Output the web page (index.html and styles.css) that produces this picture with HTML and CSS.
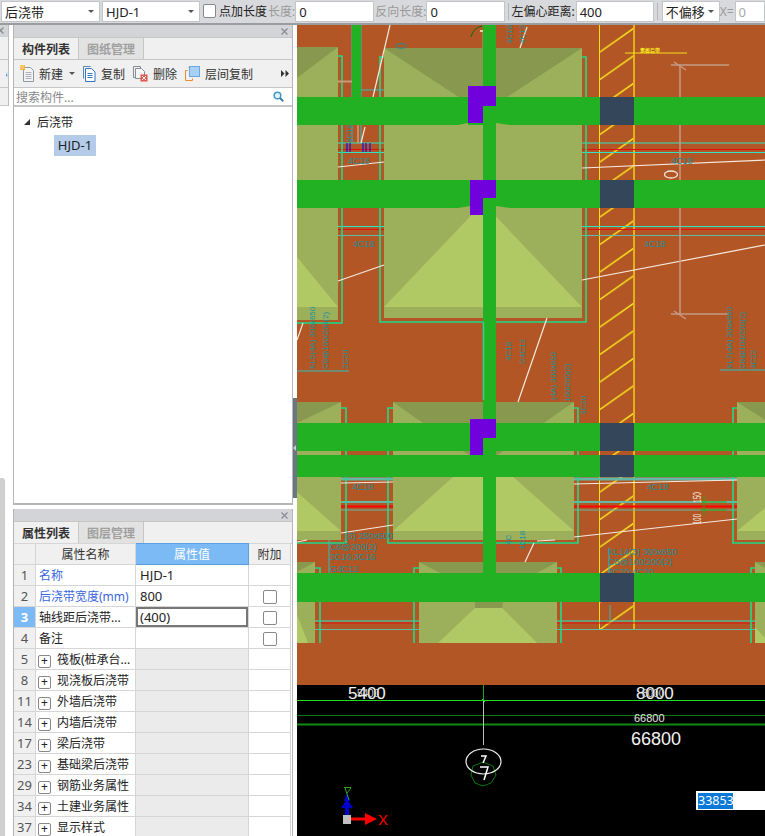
FILE: index.html
```html
<!DOCTYPE html>
<html lang="zh">
<head>
<meta charset="utf-8">
<title>后浇带</title>
<link rel="stylesheet" href="styles.css">
</head>
<body>
<div class="topbar">
  <div class="combo w99"><span>后浇带</span><i class="caret"></i></div>
  <div class="combo w98"><span>HJD-1</span><i class="caret"></i></div>
  <span class="check top-check"></span>
  <span class="lbl">点加长度</span>
  <span class="lbl dim">长度:</span>
  <div class="field w79">0</div>
  <span class="lbl dim">反向长度:</span>
  <div class="field w79">0</div>
  <i class="sep"></i>
  <span class="lbl sp">左偏心距离:</span>
  <div class="field w78">400</div>
  <i class="sep"></i>
  <div class="combo w58"><span>不偏移</span><i class="caret"></i></div>
  <span class="lbl dim nx">X=</span>
  <div class="field grow dimval">0</div>
</div>

<div class="main">
  <aside class="stub">
    <div class="stub-top">
      <div class="stub-title"><svg class="close stub-close" width="7" height="7" viewBox="0 0 7 7"><path d="M0.500 0.500L6.500 6.500M6.500 0.500L0.500 6.500" stroke="#8b8d92" stroke-width="1.300"/></svg></div>
      <div class="stub-row tall"></div>
      <div class="stub-row tools"><svg width="8" height="20" viewBox="0 0 8 20"><rect x="-4" y="0.5" width="11" height="19" rx="2" fill="#fff" stroke="#6fb0ee"/><rect x="-2" y="5" width="7" height="10" fill="#3f8fdc"/><rect x="-2" y="7" width="7" height="1" fill="#fff"/></svg></div>
      <div class="stub-row"></div>
    </div>
    <div class="stub-block"></div>
  </aside>

  <div class="side">
    <section class="panel top-panel">
      <div class="p-title"><svg class="close" width="7" height="7" viewBox="0 0 7 7"><path d="M0.500 0.500L6.500 6.500M6.500 0.500L0.500 6.500" stroke="#8b8d92" stroke-width="1.300"/></svg></div>
      <div class="tabs">
        <span class="tab on">构件列表</span><span class="tab">图纸管理</span>
      </div>
      <div class="tools">
        <svg class="ic ic-new" width="15" height="17" viewBox="0 0 15 17"><path d="M3.500 2.500h7l3 3v11h-10z" fill="#f4f4f4" stroke="#8d99a6"/><path d="M5.500 7.500h6M5.500 9.500h6M5.500 11.500h6M5.500 13.500h6" stroke="#a9b2bc"/><rect x="0" y="0" width="5" height="5" fill="#f5a020"/><path d="M1 0v5M3 0v5M0 1h5M0 3h5" stroke="#ffe2a0" stroke-width=".7"/></svg>
        <span class="t-new">新建</span><i class="caret small"></i>
        <svg class="ic ic-copy" width="13" height="16" viewBox="0 0 13 16"><path d="M.5.5h7M.5.500v12" stroke="#5d86b8" fill="none"/><path d="M2.500 2.500h6l3.500 3.500v9.500h-9.500z" fill="#fff" stroke="#2f78c6"/><path d="M4.500 7.500h5M4.500 9.500h5M4.500 11.500h5" stroke="#2f78c6"/></svg>
        <span class="t-copy">复制</span>
        <svg class="ic ic-del" width="15" height="16" viewBox="0 0 15 16"><path d="M.5.5h7v2M.500.500v11h2" stroke="#8a8f96" fill="none"/><path d="M2.500 2.500h6l3 3v7h-9z" fill="#f6f6f6" stroke="#8a8f96"/><rect x="7.500" y="8.500" width="7" height="7" fill="#e2574c"/><path d="M9 10l4 4M13 10l-4 4" stroke="#fff"/></svg>
        <span class="t-del">删除</span>
        <svg class="ic ic-layer" width="15" height="15" viewBox="0 0 15 15"><path d="M3.500 1.500v-.5M.500 14.500v-10h2M.500 14.500h7v-2" stroke="#ef8a2a" fill="none"/><rect x="4.500" y="0.500" width="10" height="10" fill="#a9d0f5" stroke="#6aa6e0"/></svg>
        <span class="t-layer">层间复制</span>
        <span class="more">
          <svg width="8" height="7" viewBox="0 0 8 7"><path d="M0 0l3.500 3.500L0 7zM4.500 0L8 3.500 4.500 7z" fill="#333"/></svg>
        </span>
      </div>
      <div class="search">
        <span class="ph">搜索构件...</span>
        <svg width="11" height="11" viewBox="0 0 11 11"><circle cx="4.500" cy="4.500" r="3.300" fill="#e3f1fb" stroke="#3f9ac9" stroke-width="1.500"/><path d="M7 7l3.200 3.200" stroke="#3f7fa8" stroke-width="2"/></svg>
      </div>
      <div class="tree">
        <div class="tree-root"><i class="tri"></i><span>后浇带</span></div>
        <div class="tree-leaf"><span>HJD-1</span></div>
      </div>
    </section>

    <section class="panel prop-panel">
      <div class="p-title"><svg class="close" width="7" height="7" viewBox="0 0 7 7"><path d="M0.500 0.500L6.500 6.500M6.500 0.500L0.500 6.500" stroke="#8b8d92" stroke-width="1.300"/></svg></div>
      <div class="tabs">
        <span class="tab on">属性列表</span><span class="tab">图层管理</span>
      </div>
      <table class="props">
        <colgroup><col class="c1"><col class="c2"><col class="c3"><col class="c4"></colgroup>
        <thead>
          <tr><th></th><th>属性名称</th><th class="hl">属性值</th><th>附加</th></tr>
        </thead>
        <tbody>
          <tr><td class="n">1</td><td class="blue">名称</td><td>HJD-1</td><td></td></tr>
          <tr><td class="n">2</td><td class="blue">后浇带宽度(mm)</td><td>800</td><td class="ct"><span class="check"></span></td></tr>
          <tr><td class="n sel">3</td><td>轴线距后浇带...</td><td class="edit">(400)</td><td class="ct"><span class="check"></span></td></tr>
          <tr><td class="n">4</td><td>备注</td><td></td><td class="ct"><span class="check"></span></td></tr>
          <tr><td class="n">5</td><td><span class="plus">+</span>筏板(桩承台...</td><td class="gv"></td><td></td></tr>
          <tr><td class="n">8</td><td><span class="plus">+</span>现浇板后浇带</td><td class="gv"></td><td></td></tr>
          <tr><td class="n">11</td><td><span class="plus">+</span>外墙后浇带</td><td class="gv"></td><td></td></tr>
          <tr><td class="n">14</td><td><span class="plus">+</span>内墙后浇带</td><td class="gv"></td><td></td></tr>
          <tr><td class="n">17</td><td><span class="plus">+</span>梁后浇带</td><td class="gv"></td><td></td></tr>
          <tr><td class="n">23</td><td><span class="plus">+</span>基础梁后浇带</td><td class="gv"></td><td></td></tr>
          <tr><td class="n">29</td><td><span class="plus">+</span>钢筋业务属性</td><td class="gv"></td><td></td></tr>
          <tr><td class="n">34</td><td><span class="plus">+</span>土建业务属性</td><td class="gv"></td><td></td></tr>
          <tr><td class="n">37</td><td><span class="plus">+</span>显示样式</td><td class="gv"></td><td></td></tr>
        </tbody>
      </table>
    </section>
  </div>

  <div class="splitter"><div class="grip"><i></i></div></div>

  <div class="canvas">
    <svg class="cad" width="468" height="811" viewBox="297 25 468 811">
      <defs>
        <pattern id="hatch" patternUnits="userSpaceOnUse" x="600" y="28" width="34" height="27.500">
          <path d="M0 24L34 0" stroke="#f6e11a" stroke-width="1.500"/>
        </pattern>
      </defs>
      <rect x="297" y="25" width="468" height="660" fill="#b25625"/>
      <rect x="297" y="685" width="468" height="151" fill="#000"/>

      <!-- pile caps -->
      <g>
        <rect class="cap-s" x="384" y="48" width="198" height="270"/>
        <polygon class="cap-d" points="384,48 582,48 483,113"/>
        <polygon class="cap-l" points="384,307 582,307 483,203"/>
        <rect class="cap-s" x="297" y="47" width="41" height="273"/>
        <polygon class="cap-d" points="297,47 338,47 297,78"/>
        <polygon class="cap-l" points="297,257 338,307 297,307"/>

        <rect class="cap-s" x="393" y="402" width="181" height="138"/>
        <polygon class="cap-d" points="393,402 574,402 483,465"/>
        <polygon class="cap-l" points="393,531 574,531 483,450"/>
        <rect class="cap-s" x="297" y="402" width="44" height="138"/>
        <polygon class="cap-d" points="297,402 341,402 297,423"/>
        <polygon class="cap-l" points="297,492 341,531 297,531"/>
        <rect class="cap-s" x="737" y="402" width="28" height="138"/>
        <polygon class="cap-d" points="737,402 765,402 765,420"/>
        <polygon class="cap-l" points="737,531 765,508 765,531"/>

        <rect class="cap-s" x="297" y="562" width="18" height="81"/>
        <polygon class="cap-d" points="297,562 315,562 297,572"/>
        <polygon class="cap-l" points="297,615 308,643 297,643"/>
        <rect class="cap-s" x="419" y="562" width="138" height="81"/>
        <polygon class="cap-d" points="419,562 557,562 535,574 442,574"/>
        <polygon class="cap-d" points="475,602 503,602 502,608 475,608"/>
        <polygon class="cap-l" points="438,643 475,608 502,608 537,643"/>
        <rect class="cap-s" x="755" y="562" width="10" height="81"/>
        <polygon class="cap-d" points="755,562 765,562 765,568"/>
        <polygon class="cap-l" points="755,627 765,638 765,643 755,643"/>
      </g>

      <!-- band with hatching -->
      <rect x="600" y="25" width="34" height="604" fill="url(#hatch)"/>
      <path class="yl" d="M599.500 25V629"/>
      <path class="or" d="M634 25V629"/>

      <!-- beam rebar lines -->
      <g class="cy">
        <path d="M338 143H384M582 143H765M338 152.500H384M582 152.500H765"/>
        <path d="M338 226.500H384M582 226.500H765"/>
        <path d="M315 621H419M557 621H755"/>
      </g>
      <g class="gc">
        <path d="M338 235.500H384M582 235.500H765"/>
        <path d="M341 502H393M574 502H737" stroke-width="2"/>
        <path d="M341 510H393M574 510H737"/>
        <path d="M315 629.500H419M557 629.500H755"/>
        <path d="M341 479H393M574 479H737" stroke-width="3"/>
      </g>
      <g class="rd">
        <path d="M338 149.500H384M582 149.500H765M338 229.500H384M582 229.500H765"/>
        <path d="M315 623H419M557 623H755"/>
      </g>
      <path d="M341 506.500H393M574 506.500H737" stroke="#f00" stroke-width="2"/>
      <path d="M347 143V152M350 143V152M363 143V152M366 143V152M370 143V152" stroke="#1111e0" stroke-width="1.200"/>

      <!-- teal outlines -->
      <g class="tl">
        <path d="M338 56H342V323H297"/>
        <path d="M384 57H380V322H586V57H582"/>
        <path d="M341 408H346V543H297"/>
        <path d="M393 408H388V543H578V408H574"/>
        <path d="M737 408H733V543H765"/>
        <path d="M315 568H320V643"/>
        <path d="M419 568H414V643"/>
        <path d="M557 568H561V643"/>
        <path d="M755 568H751V643"/>
      </g>
      <path class="thin-c" d="M352 25V143M361 25V143M361 90H384M297 371H349M720 370H765M329 540V573M609 548V600M610 605V620"/>

      <!-- white leaders -->
      <g class="wh">
        <path d="M390 25L373 97M365 127L361 143M527 27L520 48"/>
        <path d="M338 167L384 162M582 168L765 160"/>
        <path d="M338 281L384 265M582 280L765 245"/>
        <path d="M303 323L297 340M547 318L518 402M534 543L525 562M537 541L555 540M297 542L307 540"/>
        <path d="M341 483L393 482M574 484L737 480"/>
        <path d="M341 533L393 525M574 537L737 519"/>
      </g>
      <path d="M358 125V143" stroke="#d9c4b0"/>
      <path d="M338 81.500H352" stroke="#c99a80" stroke-width="2"/>

      <!-- dimension -->
      <g class="dim-l">
        <path d="M680 65V314"/>
        <path d="M671 65H729M671 314H729"/>
        <path d="M674 62L686 70M674 311L686 319"/>
      </g>
      <ellipse cx="671" cy="174.500" rx="6.500" ry="3.500" fill="#b25625" stroke="#f2e6dc" stroke-width="1.300"/>
      <path d="M625 53H687" stroke="#f6e11a"/>
      <text class="y-tx" x="640" y="52">素板后带</text>
      <path d="M471 37Q473 28 482 26" fill="none" stroke="#0b6b10"/>
      <path d="M483 30V48" stroke="#b89a80"/>
      <path d="M480 31H483" stroke="#eec8a8" stroke-width="2"/>
      <ellipse cx="401" cy="46" rx="5" ry="2.200" fill="none" stroke="#1f8f8f"/>

      <!-- teal text -->
      <g class="tx">
        <text x="348" y="164">4C18</text>
        <text x="671" y="164">4C18</text>
        <text x="353" y="247">4C18</text>
        <text x="644" y="247">4C18</text>
        <text x="352" y="490">4C18</text>
        <text x="647" y="490">4C18</text>
        <text x="345" y="539">(3) 250x500</text>
        <text x="330" y="550">C8@200(2)</text>
        <text x="330" y="560">2C16;3C16</text>
        <text x="330" y="572">G4C12</text>
        <text x="608" y="555">KL14(3) 300x650</text>
        <text x="608" y="565">C8@100/200(2)</text>
        <text x="608" y="575">2C20;4C20</text>
      </g>
      <g class="tx-v">
        <text transform="translate(512 44) rotate(-90)">4C18</text>
        <text transform="translate(525 44) rotate(-90)">4C12</text>
        <text transform="translate(352 143) rotate(-90)">4C18</text>
        <text transform="translate(315 369) rotate(-90)">KL5(4A) 300x650</text>
        <text transform="translate(328 369) rotate(-90)">C8@100/200(2)</text>
        <text transform="translate(348 369) rotate(-90)">2C20</text>
        <text transform="translate(511 361) rotate(-90)">4C18</text>
        <text transform="translate(525 364) rotate(-90)">C4C12</text>
        <text transform="translate(511 545) rotate(-90)">4C</text>
        <text transform="translate(525 550) rotate(-90)">4C18</text>
        <text transform="translate(556 400) rotate(-90)">(4A) 300x650</text>
        <text transform="translate(570 402) rotate(-90)">100/200(2)</text>
        <text transform="translate(586 415) rotate(-90)">4C20</text>
        <text transform="translate(732 369) rotate(-90)">KL7(4A) 300x650</text>
        <text transform="translate(745 369) rotate(-90)">C8@100/200(2)</text>
        <text transform="translate(756 369) rotate(-90)">4C22</text>
      </g>

      <!-- green marks -->
      <path d="M704 496V515M700 502H727M700 510H727" stroke="#2aa810" fill="none"/>
      <text class="w-sm" transform="translate(701 503) rotate(-90)" textLength="11" lengthAdjust="spacingAndGlyphs">150</text>
      <text class="w-sm" transform="translate(701 524) rotate(-90)" textLength="10" lengthAdjust="spacingAndGlyphs">100</text>

      <!-- beams -->
      <g class="gb">
        <rect x="297" y="97" width="468" height="28"/>
        <rect x="297" y="180" width="468" height="28"/>
        <rect x="297" y="423" width="468" height="28"/>
        <rect x="297" y="455" width="468" height="22"/>
        <rect x="297" y="573" width="468" height="29"/>
        <rect x="352" y="25" width="9" height="72"/>
        <rect x="483" y="25" width="13" height="548"/>
      </g>
      <g class="cap-s">
        <polygon points="458,125 468,123 468,125"/>
        <polygon points="496,123 510,125 496,125"/>
        <polygon points="458,208 470,206 470,208"/>
        <polygon points="496,206 510,208 496,208"/>
      </g>
      <path class="tl" d="M483.500 322V400"/>
      <g class="nv">
        <rect x="600" y="97" width="34" height="28"/>
        <rect x="600" y="180" width="34" height="28"/>
        <rect x="600" y="423" width="34" height="28"/>
        <rect x="600" y="455" width="34" height="22"/>
        <rect x="600" y="573" width="34" height="29"/>
      </g>
      <g class="pp">
        <path d="M468 86H496V106H483V123H468z"/>
        <path d="M470 180H496V198H483V215H470z"/>
        <path d="M470 419H496V438H483V455H470z"/>
      </g>

      <!-- black strip -->
      <path d="M297 700.500H765" stroke="#1fe01f"/>
      <path d="M297 715.500H765" stroke="#0a7a0a"/>
      <path d="M297 724.500H765" stroke="#108a10" stroke-width="2"/>
      <path d="M483.500 685V700" stroke="#1fa01f"/>
      <path d="M483.500 700V745" stroke="#bbb"/>
      <path d="M481 700.500H486M482 699L485 702" stroke="#1fe01f"/>
      <text class="w-lg" x="348" y="699">5400</text>
      <text class="w-ghost" x="357" y="697">5400</text>
      <text class="w-lg" x="636" y="699">8000</text>
      <text class="w-ghost" x="642" y="697">8000</text>
      <text class="w-xs" x="634" y="722">66800</text>
      <text class="w-xl" x="631" y="745">66800</text>
      <polygon points="483,762 493,766 496,775 491,783 483,786 475,783 471,775 473,766" fill="none" stroke="#0a7a0a"/>
      <ellipse cx="483.500" cy="761.500" rx="17.500" ry="12.500" fill="none" stroke="#eee" stroke-width="1.200"/>
      <path d="M481 756H486L483 763M480 767H488L484 780" fill="none" stroke="#fff" stroke-width="1.500"/>

      <!-- axis -->
      <path d="M347 815V802" stroke="#00c" stroke-width="4"/>
      <path d="M341 808L347 799L353 808z" fill="#00c"/>
      <path d="M344 801L347 792L350 801z" fill="#00c"/>
      <path d="M344 787.500H351M345 788L349 800M351 788L347 793" stroke="#2aa810" fill="none"/>
      <rect x="343" y="815" width="8" height="9" fill="#c0c0c0"/>
      <path d="M351 819H366" stroke="#f00" stroke-width="3"/>
      <path d="M365 813L377 819L365 825z" fill="#f00"/>
      <text class="ax" x="378" y="825">X</text>
    </svg>
    <div class="coord"><span>33853</span></div>
  </div>
</div>
</body>
</html>
```

FILE: styles.css
```css
* { box-sizing: border-box; }
html, body { margin: 0; padding: 0; height: 100%; overflow: hidden; }
body {
  width: 765px;
  height: 836px;
  background: #fff;
  color: #222;
  font: 12px "Noto Sans", "Noto Sans CJK SC", sans-serif;
  display: flex;
  flex-direction: column;
}
i { display: block; font-style: normal; }

/* top toolbar */
.topbar {
  height: 25px;
  flex: none;
  display: flex;
  align-items: flex-start;
  padding-top: 1px;
  padding-left: 1px;
  background: #d8d9dc;
  border-bottom: 2px solid #9b9ca0;
}
.combo, .field {
  height: 21px;
  background: #fff;
  display: flex;
  align-items: center;
  padding-left: 3px;
  font-size: 13px;
  border: 1px solid #c4c5c8;
}
.combo { justify-content: space-between; padding-right: 5px; }
.w99 { width: 99px; }
.w98 { width: 98px; margin-left: 2px; }
.w79 { width: 79px; }
.w78 { width: 78px; }
.w58 { width: 58px; margin-left: 2px; }
.grow { flex: 1; margin-left: 1px; }
.dimval { color: #aaa; }
.caret {
  width: 0; height: 0;
  border-left: 3px solid transparent;
  border-right: 3px solid transparent;
  border-top: 3px solid #555;
}
.check {
  display: inline-block;
  width: 14px; height: 14px;
  border: 1px solid #888;
  border-radius: 2px;
  background: #fff;
  vertical-align: middle;
}
.top-check { margin: 3px 3px 0 3px; width: 13px; height: 14px; }
.lbl { line-height: 21px; font-size: 12px; white-space: nowrap; }
.lbl.dim { color: #999; margin-left: 1px; }
.lbl.nx { margin-left: 0; }
.lbl.sp { margin-right: 1px; }
.sep { width: 1px; height: 17px; margin: 2px 2px 0 3px; background: #b5b6b9; }

/* main row */
.main { flex: 1; display: flex; min-height: 0; }

.stub { width: 13px; flex: none; display: flex; flex-direction: column; justify-content: space-between; }
.stub-top { width: 9px; border-right: 1px solid #bbb; background: #f0f0f0; overflow: hidden; }
.stub-title { height: 12px; background: #d3d4d8; position: relative; overflow: hidden; }
.stub-close { position: absolute; left: -3px; top: 2px; }
.stub-row { height: 18px; border-bottom: 1px solid #c8c8c8; }
.stub-row.tall { height: 23px; }
.stub-row.tools { height: 28px; padding-top: 2px; }
.stub-row.tools svg { display: block; }
.stub-block { width: 5px; height: 358px; background: #cfcfcf; border-top-right-radius: 3px; }

.side { width: 280px; flex: none; display: flex; flex-direction: column; gap: 4px; }
.panel {
  border-left: 1px solid #b5b5b5;
  border-right: 1px solid #b5b5b5;
  background: #fff;
  display: flex;
  flex-direction: column;
  overflow: hidden;
}
.top-panel { height: 480px; border-bottom: 2px solid #b5b5b5; }
.prop-panel { flex: 1; min-height: 0; }
.p-title {
  height: 12px;
  flex: none;
  background: #d3d4d8;
  display: flex;
  align-items: center;
  justify-content: flex-end;
  padding-right: 4px;
}
.tabs {
  height: 23px;
  flex: none;
  display: flex;
  background: #f0f0f0;
  border-top: 1px solid #c6c6c6;
  border-bottom: 1px solid #c6c6c6;
}
.tab {
  width: 65px;
  line-height: 22px;
  margin-top: -1px;
  padding-top: 1px;
  text-align: center;
  font-size: 12px;
  font-weight: 700;
  color: #a0a0a0;
  background: #e2e2e2;
  border-right: 1px solid #c6c6c6;
  border-top: 1px solid #c6c6c6;
}
.tab.on { color: #333; background: #f0f0f0; }

.tools {
  height: 28px;
  flex: none;
  display: flex;
  align-items: center;
  background: #f0f0f0;
  border-bottom: 1px solid #c6c6c6;
  padding-left: 6px;
}
.tools span { color: #333; }
.t-new { margin-left: 4px; }
.caret.small { margin-left: 6px; }
.ic-copy { margin-left: 8px; }
.t-copy { margin-left: 5px; }
.ic-del { margin-left: 8px; }
.t-del { margin-left: 5px; }
.ic-layer { margin-left: 8px; }
.t-layer { margin-left: 5px; }
.more { margin-left: auto; padding-right: 3px; display: flex; }

.search {
  height: 19px;
  flex: none;
  display: flex;
  align-items: center;
  justify-content: space-between;
  padding: 0 8px 0 2px;
  border-bottom: 2px solid #c6c6c6;
}
.ph { color: #888; }

.tree { flex: 1; padding-top: 4px; }
.tree-root { height: 21px; display: flex; align-items: center; padding-left: 10px; gap: 7px; }
.tri {
  width: 0; height: 0;
  border-left: 6px solid transparent;
  border-bottom: 6px solid #333;
}
.tree-leaf { padding-left: 40px; margin-top: 3px; }
.tree-leaf span {
  display: inline-block;
  width: 42px; height: 21px;
  line-height: 21px;
  text-align: center;
  background: #b4cce9;
  font-size: 13px;
}

/* property table */
.props {
  width: 277px;
  margin: -1px 0 0 -1px;
  table-layout: fixed;
  border-collapse: collapse;
  font-size: 12px;
}
.c1 { width: 22px; }
.c2 { width: 100px; }
.c3 { width: 113px; }
.c4 { width: 42px; }
.props th, .props td {
  height: 21px;
  padding: 0 0 0 3px;
  border: 1px solid #d6d6d6;
  font-weight: 400;
  white-space: nowrap;
  overflow: hidden;
}
.props th { background: #f0f0f0; color: #333; text-align: center; padding: 0; }
.props th.hl { background: #7cbaf6; color: #fff; border-color: #5b9fe0; }
.props td.n { background: #f0f0f0; color: #555; text-align: center; padding: 0; font-size: 13px; }
.props td.n.sel { background: #7cbaf6; color: #fff; font-weight: 700; }
.props td { font-size: 12px; }
.props td:nth-child(3) { font-size: 13px; padding-left: 4px; }
.props td.blue { color: #3a66e0; }
.props td.edit { box-shadow: inset 0 0 0 2px #777; }
.props td.gv { background: #ebebeb; }
.props td.ct { text-align: center; padding: 0; }
.plus {
  display: inline-block;
  width: 13px; height: 13px;
  margin: 0 6px 0 -1px;
  border: 1px solid #888;
  border-radius: 2px;
  text-align: center;
  line-height: 10px;
  font-size: 12px;
  vertical-align: -1px;
}

/* splitter */
.splitter { width: 4px; flex: none; position: relative; }
.grip {
  position: absolute;
  left: 0; top: 373px;
  width: 4px; height: 100px;
  background: #6c7683;
}
.grip i {
  position: absolute;
  top: 47px; left: 0;
  border-top: 3px solid transparent;
  border-bottom: 3px solid transparent;
  border-right: 3px solid #c8ccd2;
}

/* CAD view */
.canvas { flex: 1; position: relative; overflow: hidden; background: #000; }
.cad { display: block; }
.coord {
  position: absolute;
  left: 399px; top: 766px;
  width: 69px; height: 19px;
  background: #fff;
  padding: 2px 0 0 2px;
}
.coord span {
  display: block;
  width: 35px; height: 16px;
  background: #0a78d7;
  color: #fff;
  font-size: 12.500px;
  line-height: 16px;
}

.cap-s { fill: #9cb05c; }
.cap-d { fill: #88984e; }
.cap-l { fill: #b0c964; }
.gb rect { fill: #22b122; }
.nv rect { fill: #33465a; }
.pp path { fill: #7000dc; }
.yl { stroke: #f6e11a; stroke-width: 1; fill: none; }
.or { stroke: #e3b21a; stroke-width: 2; fill: none; }
.cy path { stroke: #2fe3c6; fill: none; }
.gc path { stroke: #63b8a6; fill: none; }
.rd path { stroke: #e01010; fill: none; }
.tl path, path.tl { stroke: #1ddc8a; stroke-width: 1.600; fill: none; }
.thin-c { stroke: #2bc0c0; stroke-width: 1; fill: none; }
.wh path { stroke: #f6e9e0; stroke-width: 1.200; fill: none; }
.dim-l path { stroke: #c49a86; stroke-width: 1.500; fill: none; }
.tx text {
  fill: #17909b;
  font: 9px "Liberation Sans", sans-serif;
}
.tx-v text {
  fill: #17909b;
  font: 8px "Liberation Sans", sans-serif;
}
.y-tx { fill: #fbef20; font: 700 5px "Noto Sans CJK SC", sans-serif; }
.w-sm { fill: #f4e6dc; font: 11px "Liberation Sans", sans-serif; }
.w-lg { fill: #f2f2f2; font: 17px "Liberation Sans", sans-serif; }
.w-ghost { fill: #cfcfcf; font: 10px "Liberation Sans", sans-serif; }
.w-xs { fill: #e4e4e4; font: 11px "Liberation Sans", sans-serif; }
.w-xl { fill: #f2f2f2; font: 18px "Liberation Sans", sans-serif; }
.ax { fill: #f00; font: 15px "Liberation Sans", sans-serif; }
```
